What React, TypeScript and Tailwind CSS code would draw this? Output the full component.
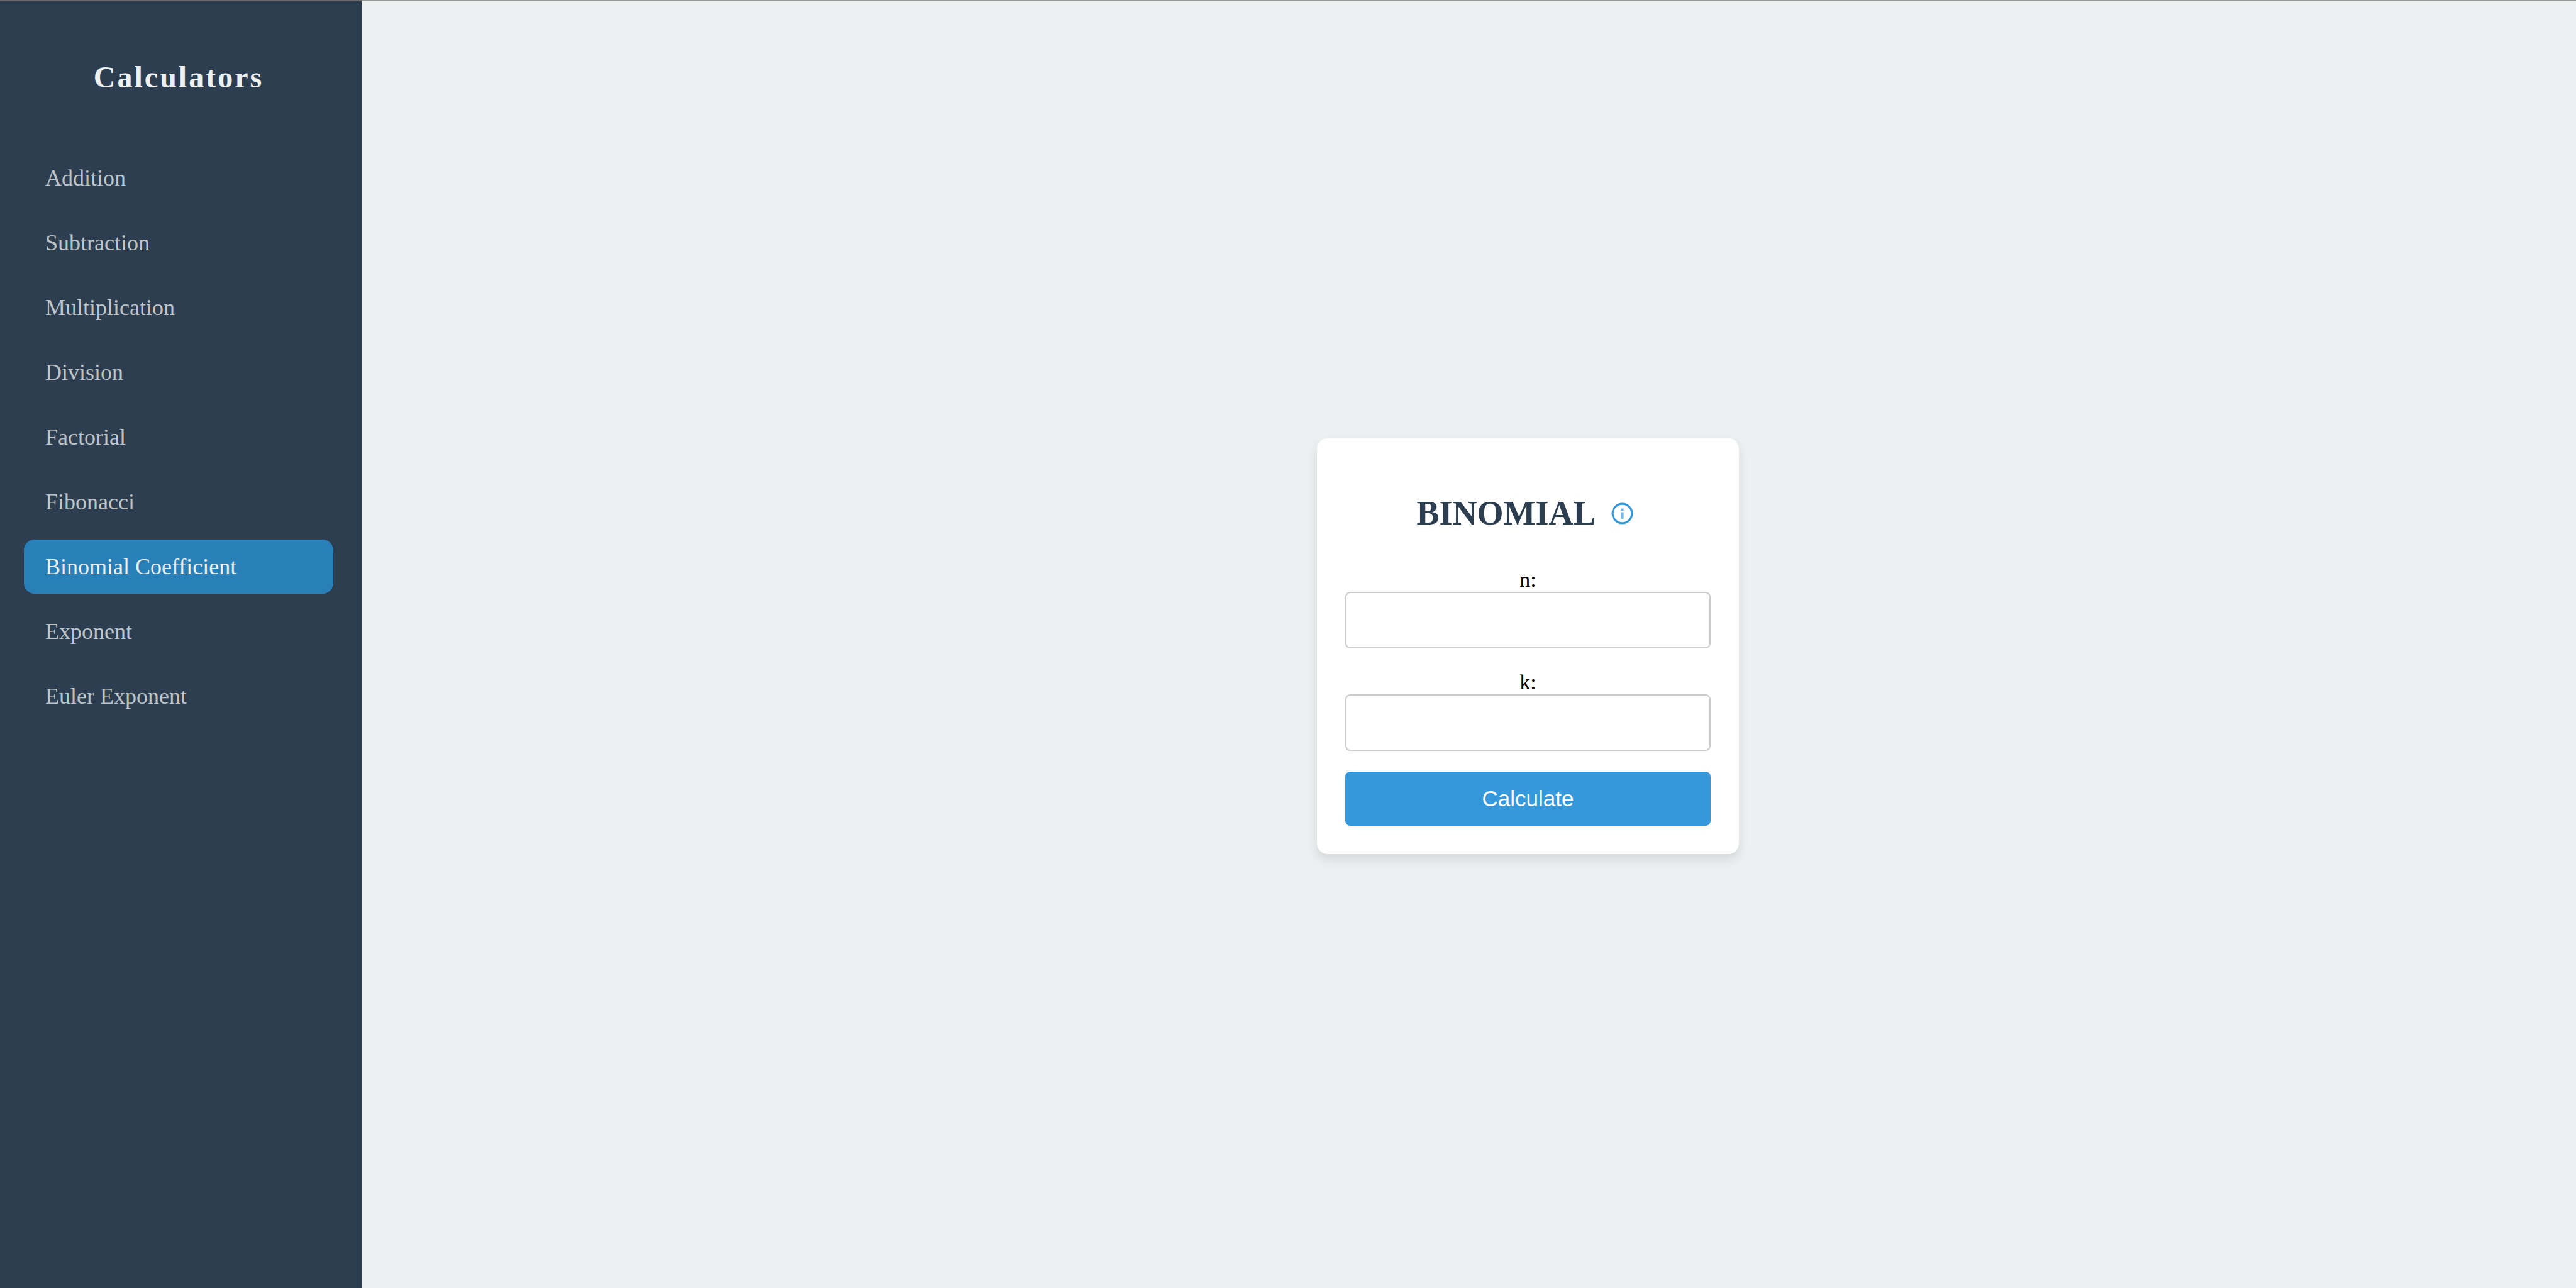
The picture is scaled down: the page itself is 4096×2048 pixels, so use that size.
const calculators = [
  "Addition",
  "Subtraction",
  "Multiplication",
  "Division",
  "Factorial",
  "Fibonacci",
  "Binomial Coefficient",
  "Exponent",
  "Euler Exponent",
];

const active = "Binomial Coefficient";

function InfoIcon() {
  return (
    <svg viewBox="0 0 24 24" className="size-[41px]" fill="none" aria-hidden="true">
      <circle cx="12" cy="12" r="9" stroke="#3498db" strokeWidth="1.9" />
      <path d="M12 7.3v2M12 10.8v6" stroke="#3498db" strokeOpacity="0.7" strokeWidth="2.6" />
    </svg>
  );
}

function Field({ id }: { id: string }) {
  return (
    <div className="flex flex-col">
      <label htmlFor={id} className="text-center text-[34px] leading-[38px] text-black">
        {id}:
      </label>
      <input
        id={id}
        type="text"
        className="h-[90px] w-full rounded-lg border-2 border-[#cccccc] bg-white px-5 text-[34px] outline-none"
      />
    </div>
  );
}

export default function App() {
  return (
    <div className="flex min-h-screen bg-[#ecf0f1] font-['Liberation_Serif',serif]">
      <aside className="w-[575px] shrink-0 border-t-2 border-[#6b6c70] bg-[#2c3e50] pt-[93px] pr-[45px] pl-[38px]">
        <h1 className="text-center text-[48px] leading-[56px] font-bold tracking-[3px] text-[#ecf0f1]">
          Calculators
        </h1>
        <nav className="mt-[89px] flex flex-col gap-[17px]">
          {calculators.map((name) => (
            <a
              key={name}
              href="#"
              aria-current={name === active ? "page" : undefined}
              className={
                name === active
                  ? "flex h-[86px] items-center rounded-[17px] bg-[#2980b9] px-[34px] text-[36px] text-[#ecf0f1]"
                  : "flex h-[86px] items-center rounded-[17px] px-[34px] text-[36px] text-[#bdc3c7]"
              }
            >
              {name}
            </a>
          ))}
        </nav>
      </aside>
      <main className="flex grow items-center justify-center border-t-2 border-[#959696] pt-[5px] pl-[188px]">
        <form
          className="w-[671px] rounded-[17px] bg-white p-[45px] shadow-[0_9px_17px_rgba(0,0,0,0.1)]"
          onSubmit={(e) => e.preventDefault()}
        >
          <div className="mt-[42px] mb-[55px] flex items-center justify-center gap-[21px] pr-[7px]">
            <h2 className="text-[54px] leading-[64px] font-bold text-[#2c3e50]">BINOMIAL</h2>
            <button type="button" aria-label="About this calculator">
              <InfoIcon />
            </button>
          </div>
          <div className="flex flex-col gap-[35px]">
            <Field id="n" />
            <Field id="k" />
          </div>
          <button
            type="submit"
            className="mt-[33px] block h-[86px] w-full rounded-lg bg-[#3498db] font-['Liberation_Sans',sans-serif] text-[35px] text-white"
          >
            Calculate
          </button>
        </form>
      </main>
    </div>
  );
}
